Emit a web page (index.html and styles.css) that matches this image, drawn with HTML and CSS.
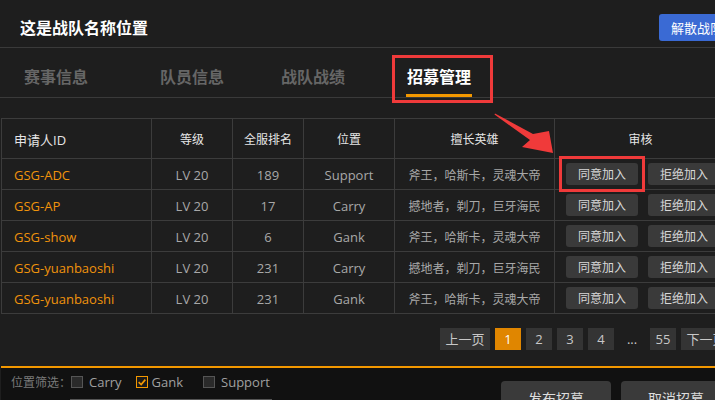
FILE: index.html
```html
<!DOCTYPE html>
<html lang="zh-CN">
<head>
  <meta charset="UTF-8" />
  <meta name="viewport" content="width=device-width, initial-scale=1.0"/>
  <title>招募管理</title>
  <link rel="stylesheet" href="styles.css">
</head>
<body>
<div class="page">

  <header class="team-head">
    <h1>这是战队名称位置</h1>
    <button class="disband">解散战队</button>
  </header>

  <nav class="tabs">
    <a class="tab">赛事信息</a>
    <a class="tab">队员信息</a>
    <a class="tab">战队战绩</a>
    <a class="tab active"><span>招募管理</span><i class="mark mark-tab"></i></a>
  </nav>

  <table class="apply">
    <colgroup>
      <col style="width:150px"><col style="width:81px"><col style="width:71px">
      <col style="width:91px"><col style="width:160px"><col style="width:172px">
    </colgroup>
    <thead>
      <tr>
        <th class="id">申请人ID</th>
        <th>等级</th>
        <th>全服排名</th>
        <th>位置</th>
        <th>擅长英雄</th>
        <th>审核</th>
      </tr>
    </thead>
    <tbody id="rows"></tbody>
  </table>

  <div class="pager">
    <a class="pg">上一页</a>
    <a class="pg on">1</a>
    <a class="pg">2</a>
    <a class="pg">3</a>
    <a class="pg">4</a>
    <span class="dots">...</span>
    <a class="pg">55</a>
    <a class="pg">下一页</a>
  </div>

  <footer class="recruit">
    <div class="filter-col">
      <div class="filter">
        <span class="filter-label">位置筛选：</span>
        <label class="chk"><i class="box"></i>Carry</label>
        <label class="chk checked"><i class="box">
          <svg viewBox="0 0 12 12" width="10" height="10"><path d="M2 6.2 L5 9 L10 3.2" fill="none" stroke="#f39800" stroke-width="2"/></svg>
        </i>Gank</label>
        <label class="chk"><i class="box"></i>Support</label>
      </div>
      <div class="note-input"></div>
    </div>
    <div class="actions">
      <button class="big">发布招募</button>
      <button class="big">取消招募</button>
    </div>
  </footer>

  <svg class="arrow" width="715" height="400" viewBox="0 0 715 400">
    <polygon points="495,113.5 533,134 549,131 553,153 522,147 530,140 494.5,114.5" fill="#f03a3a"/>
  </svg>
</div>

<script>
  const rows = [
    ["GSG-ADC", "LV 20", 189, "Support", "斧王，哈斯卡，灵魂大帝"],
    ["GSG-AP", "LV 20", 17, "Carry", "撼地者，剃刀，巨牙海民"],
    ["GSG-show", "LV 20", 6, "Gank", "斧王，哈斯卡，灵魂大帝"],
    ["GSG-yuanbaoshi", "LV 20", 231, "Carry", "撼地者，剃刀，巨牙海民"],
    ["GSG-yuanbaoshi", "LV 20", 231, "Gank", "斧王，哈斯卡，灵魂大帝"]
  ];

  const body = document.getElementById("rows");
  rows.forEach((r, i) => {
    const tr = document.createElement("tr");
    const mark = i === 0 ? '<i class="mark mark-btn"></i>' : '';
    tr.innerHTML = `
      <td class="id">${r[0]}</td>
      <td>${r[1]}</td>
      <td>${r[2]}</td>
      <td class="pos">${r[3]}</td>
      <td class="cn">${r[4]}</td>
      <td class="ops"><button class="op">同意加入${mark}</button><button class="op">拒绝加入</button></td>
    `;
    body.appendChild(tr);
  });
</script>
</body>
</html>
```

FILE: styles.css
```css
body {
  margin: 0;
  background: #1e1e1e;
  font-family: "Open Sans", "Noto Sans CJK SC", sans-serif;
  color: #aaa;
  overflow: hidden;
}
.page {
  position: relative;
  width: 760px;
  height: 400px;
}
.team-head {
  display: flex;
  align-items: center;
  height: 40px;
  padding: 7px 0 0 20px;
  border-bottom: 1px solid #3a3a3a;
}
.team-head h1 {
  margin: 0;
  font-size: 16px;
  font-weight: bold;
  color: #fff;
  flex: 1;
}
.disband {
  background: #3a6ad4;
  color: #fff;
  border: none;
  border-radius: 3px;
  height: 27px;
  width: 101px;
  padding: 0 0 0 12px;
  text-align: left;
  font-family: inherit;
  font-size: 13px;
}
.tabs {
  display: grid;
  grid-template-columns: 136px 121px 126px auto;
  padding-left: 24px;
  border-bottom: 1px solid #3a3a3a;
}
.tab {
  font-family: "Noto Sans CJK SC", sans-serif;
  font-size: 16px;
  font-weight: bold;
  line-height: 22px;
  color: #666;
  padding-top: 17px;
  padding-bottom: 10px;
}
.tab.active {
  position: relative;
  justify-self: start;
  color: #fff;
  padding-bottom: 0;
}
.tab.active span {
  display: inline-block;
  margin-left: -1px;
  padding: 0 1px 7px;
  border-bottom: 3px solid #f39800;
}
.mark {
  position: absolute;
  border: 3px solid #f03a3a;
  box-sizing: border-box;
}
.mark-tab {
  left: -15px;
  top: 7px;
  width: 101px;
  height: 48px;
}
.apply {
  margin: 20px 0 0 1px;
  border-collapse: collapse;
  table-layout: fixed;
  width: 725px;
  font-size: 13px;
}
.apply th,
.apply td {
  border: 1px solid #3c3c3c;
  text-align: center;
  padding: 0;
  white-space: nowrap;
}
.apply th {
  height: 38px;
  font-weight: normal;
  font-size: 12px;
  color: #e6e6e6;
  padding-top: 1px;
}
.apply td {
  height: 28px;
  color: #a8a8a8;
  padding-top: 2px;
}
.apply .id {
  text-align: left;
  padding-left: 12px;
}
.apply th.id {
  font-size: 13px;
}
.apply td.id {
  color: #f0930c;
}
.apply td.cn {
  font-size: 12px;
}
.apply td.ops {
  text-align: left;
  padding: 0 0 0 11px;
}
.op {
  position: relative;
  background: #3a3a3a;
  color: #d8d8d8;
  border: none;
  border-radius: 3px;
  width: 72px;
  height: 22px;
  padding: 0;
  margin-right: 10px;
  font-family: inherit;
  font-size: 12px;
  vertical-align: middle;
}
.mark-btn {
  left: -7px;
  top: -7px;
  width: 86px;
  height: 36px;
}
.pager {
  display: flex;
  gap: 5px;
  margin-top: 14px;
  padding-left: 440px;
}
.pg {
  background: #343434;
  color: #c8c8c8;
  font-size: 13px;
  line-height: 22px;
  min-width: 26px;
  text-align: center;
}
.pg:first-child,
.pg:last-child {
  width: 50px;
}
.pg.on {
  background: #e08600;
  color: #fff;
}
.dots {
  width: 26px;
  text-align: center;
  font-size: 13px;
  line-height: 22px;
  color: #c8c8c8;
}
.recruit {
  display: flex;
  margin-top: 16px;
  margin-left: 1px;
  border-top: 2px solid #f39800;
  background: #111;
  height: 40px;
}
.filter-col {
  padding: 5px 0 0 10px;
  width: 470px;
}
.filter {
  display: flex;
  align-items: center;
  height: 18px;
  font-size: 13px;
}
.filter-label {
  color: #7a7a7a;
  font-size: 12px;
}
.chk {
  display: flex;
  align-items: center;
  color: #a0a0a0;
  margin-right: 14px;
}
.box {
  width: 10px;
  height: 10px;
  border: 1px solid #555;
  background: #2a2a2a;
  margin-right: 6px;
  display: flex;
}
.checked .box {
  border-color: #f39800;
  background: #1a1a1a;
  margin-right: 4px;
}
.chk.checked {
  margin-right: 20px;
}
.note-input {
  margin: 8px 0 0 59px;
  width: 200px;
  height: 20px;
  border: 1px solid #555;
  background: #1a1a1a;
}
.actions {
  display: flex;
  gap: 10px;
  padding: 13px 0 0 20px;
}
.big {
  width: 110px;
  height: 34px;
  background: #3a3a3a;
  color: #ddd;
  border: none;
  border-radius: 4px;
  font-family: inherit;
  font-size: 14px;
}
.arrow {
  position: absolute;
  left: 0;
  top: 0;
  pointer-events: none;
}
```
